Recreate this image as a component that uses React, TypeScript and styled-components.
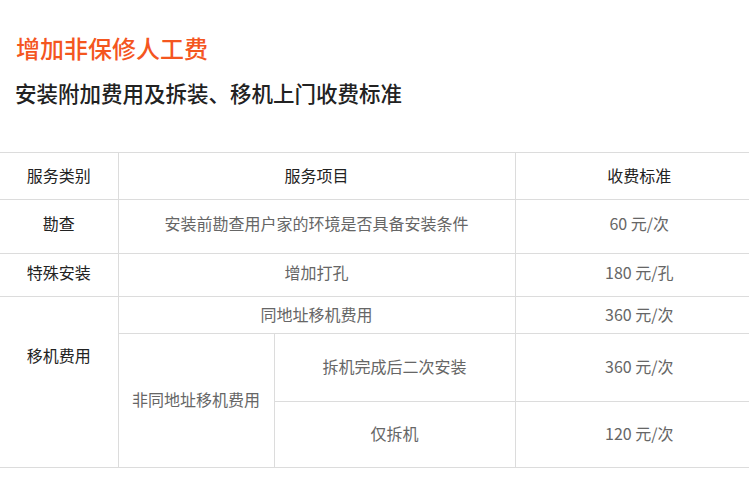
import React from "react";
import styled, { createGlobalStyle } from "styled-components";

const Global = createGlobalStyle`
  html, body { margin: 0; padding: 0; background: #fff; }
  body { font-family: "Noto Sans CJK SC", "Noto Sans", sans-serif; }
`;

const Page = styled.div`
  width: 750px;
  padding-top: 30px;
`;

const Heading = styled.h1`
  margin: 0 0 0 16px;
  font-size: 24px;
  line-height: 36px;
  font-weight: 500;
  color: #f4561f;
`;

const SubHeading = styled.h2`
  margin: 9px 0 0 15px;
  font-size: 21.5px;
  line-height: 36px;
  font-weight: 500;
  color: #222;
`;

const Table = styled.table`
  margin-top: 41px;
  width: 749px;
  border-collapse: collapse;
  table-layout: fixed;
  font-size: 16px;
`;

const Row = styled.tr<{ $h: number }>`
  height: ${(p) => p.$h}px;
`;

const Cell = styled.td<{ $strong?: boolean; $lift?: number; $edge?: boolean; $price?: boolean }>`
  border-top: 1px solid #dcdcdc;
  border-bottom: 1px solid #dcdcdc;
  border-left: ${(p) => (p.$edge ? "none" : "1px solid #dcdcdc")};
  padding: 0 0 ${(p) => p.$lift ?? 3}px ${(p) => (p.$price ? 14 : 0)}px;
  text-align: center;
  vertical-align: middle;
  color: ${(p) => (p.$strong ? "#222" : "#666")};
  font-weight: 400;
  line-height: 22px;
`;

const Head = styled(Cell).attrs({ as: "th" })``;

export default function App() {
  return (
    <Page>
      <Global />
      <Heading>增加非保修人工费</Heading>
      <SubHeading>安装附加费用及拆装、移机上门收费标准</SubHeading>
      <Table>
        <colgroup>
          <col style={{ width: 118 }} />
          <col style={{ width: 156 }} />
          <col style={{ width: 241 }} />
          <col style={{ width: 234 }} />
        </colgroup>
        <thead>
          <Row $h={47}>
            <Head $strong $edge>服务类别</Head>
            <Head $strong colSpan={2}>服务项目</Head>
            <Head $strong $price>收费标准</Head>
          </Row>
        </thead>
        <tbody>
          <Row $h={54}>
            <Cell $strong $edge $lift={7}>勘查</Cell>
            <Cell colSpan={2} $lift={7}>安装前勘查用户家的环境是否具备安装条件</Cell>
            <Cell $price $lift={7}>60 元/次</Cell>
          </Row>
          <Row $h={43}>
            <Cell $strong $edge $lift={6}>特殊安装</Cell>
            <Cell colSpan={2} $lift={6}>增加打孔</Cell>
            <Cell $price $lift={6}>180 元/孔</Cell>
          </Row>
          <Row $h={37}>
            <Cell $strong $edge rowSpan={3} $lift={54}>移机费用</Cell>
            <Cell colSpan={2}>同地址移机费用</Cell>
            <Cell $price>360 元/次</Cell>
          </Row>
          <Row $h={68}>
            <Cell rowSpan={2}>非同地址移机费用</Cell>
            <Cell>拆机完成后二次安装</Cell>
            <Cell $price>360 元/次</Cell>
          </Row>
          <Row $h={66}>
            <Cell>仅拆机</Cell>
            <Cell $price>120 元/次</Cell>
          </Row>
        </tbody>
      </Table>
    </Page>
  );
}
